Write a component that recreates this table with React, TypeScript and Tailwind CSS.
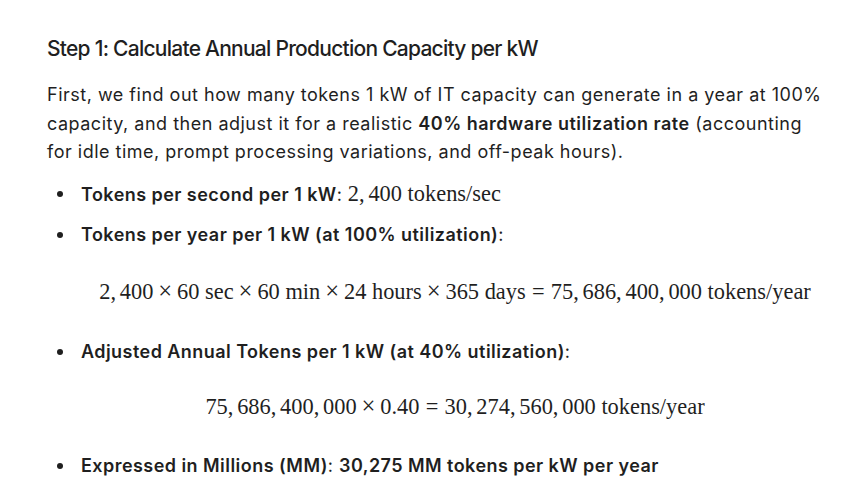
import React from 'react';

const serif = { fontFamily: '"Liberation Serif", "Times New Roman", serif' };

function Num({ value }: { value: string }) {
    const parts = value.split(',');
    return (
        <span>
            {parts.map((p, i) => (
                <span key={i}>
                    {p}
                    {i < parts.length - 1 && <span className="mr-[0.167em]">,</span>}
                </span>
            ))}
        </span>
    );
}

function Op({ children }: { children: React.ReactNode }) {
    return <span className="mx-[0.2em] text-[1.1em] leading-none">{children}</span>;
}

function Rel({ children }: { children: React.ReactNode }) {
    return <span className="mx-[0.278em]">{children}</span>;
}

function Bullet({ children }: { children: React.ReactNode }) {
    return (
        <li className="flex">
            <span className="flex h-[28px] w-[34px] shrink-0 items-center pl-[10px]">
                <span className="h-[6px] w-[6px] rounded-full bg-[#1f1f1f]" />
            </span>
            <div className="min-w-0 flex-1">{children}</div>
        </li>
    );
}

function Display({ children, className }: { children: React.ReactNode; className: string }) {
    return (
        <div className={'flex items-baseline justify-center whitespace-nowrap text-[22.4px] leading-[28px] tracking-normal ' + className} style={serif}>
            {children}
        </div>
    );
}

export default function App() {
    return (
        <div className="min-h-[499px] bg-white text-[#1f1f1f]" style={{ fontFamily: 'Inter, "Noto Sans", sans-serif' }}>
            <div className="w-[829px] pl-[47px] pt-[35px]">
                <h2 className="text-[21px] font-medium leading-[28px] tracking-[-0.75px]">Step 1: Calculate Annual Production Capacity per kW</h2>

                <p className="mt-[18px] text-[18px] leading-[28.5px] tracking-[0.5px]">
                    First, we find out how many tokens 1&nbsp;kW of IT capacity can generate in a year at 100% capacity, and then adjust
                    it for a realistic <strong className="font-semibold">40% hardware utilization rate</strong> (accounting for idle time,
                    prompt processing variations, and off-peak hours).
                </p>

                <ul className="mt-[13px] flex flex-col gap-[12px] text-[18px] leading-[28px] tracking-[0.45px]">
                    <Bullet>
                        <strong className="font-semibold">Tokens per second per 1&nbsp;kW</strong>:{' '}
                        <span className="text-[22.4px] tracking-normal" style={serif}>
                            <Num value="2,400" /> tokens/sec
                        </span>
                    </Bullet>
                    <Bullet>
                        <strong className="font-semibold">Tokens per year per 1&nbsp;kW (at 100% utilization)</strong>:
                        <Display className="mb-[20px] mt-[29px]">
                            <Num value="2,400" />
                            <Op>×</Op>
                            60 sec
                            <Op>×</Op>
                            60 min
                            <Op>×</Op>
                            24 hours
                            <Op>×</Op>
                            365 days
                            <Rel>=</Rel>
                            <Num value="75,686,400,000" />
                            &nbsp;tokens/year
                        </Display>
                    </Bullet>
                    <Bullet>
                        <strong className="font-semibold">Adjusted Annual Tokens per 1&nbsp;kW (at 40% utilization)</strong>:
                        <Display className="mb-[19px] mt-[27px]">
                            <Num value="75,686,400,000" />
                            <Op>×</Op>
                            0.40
                            <Rel>=</Rel>
                            <Num value="30,274,560,000" />
                            &nbsp;tokens/year
                        </Display>
                    </Bullet>
                    <Bullet>
                        <strong className="font-semibold">Expressed in Millions (MM)</strong>:{' '}
                        <strong className="font-semibold">30,275 MM tokens per kW per year</strong>
                    </Bullet>
                </ul>
            </div>
        </div>
    );
}
